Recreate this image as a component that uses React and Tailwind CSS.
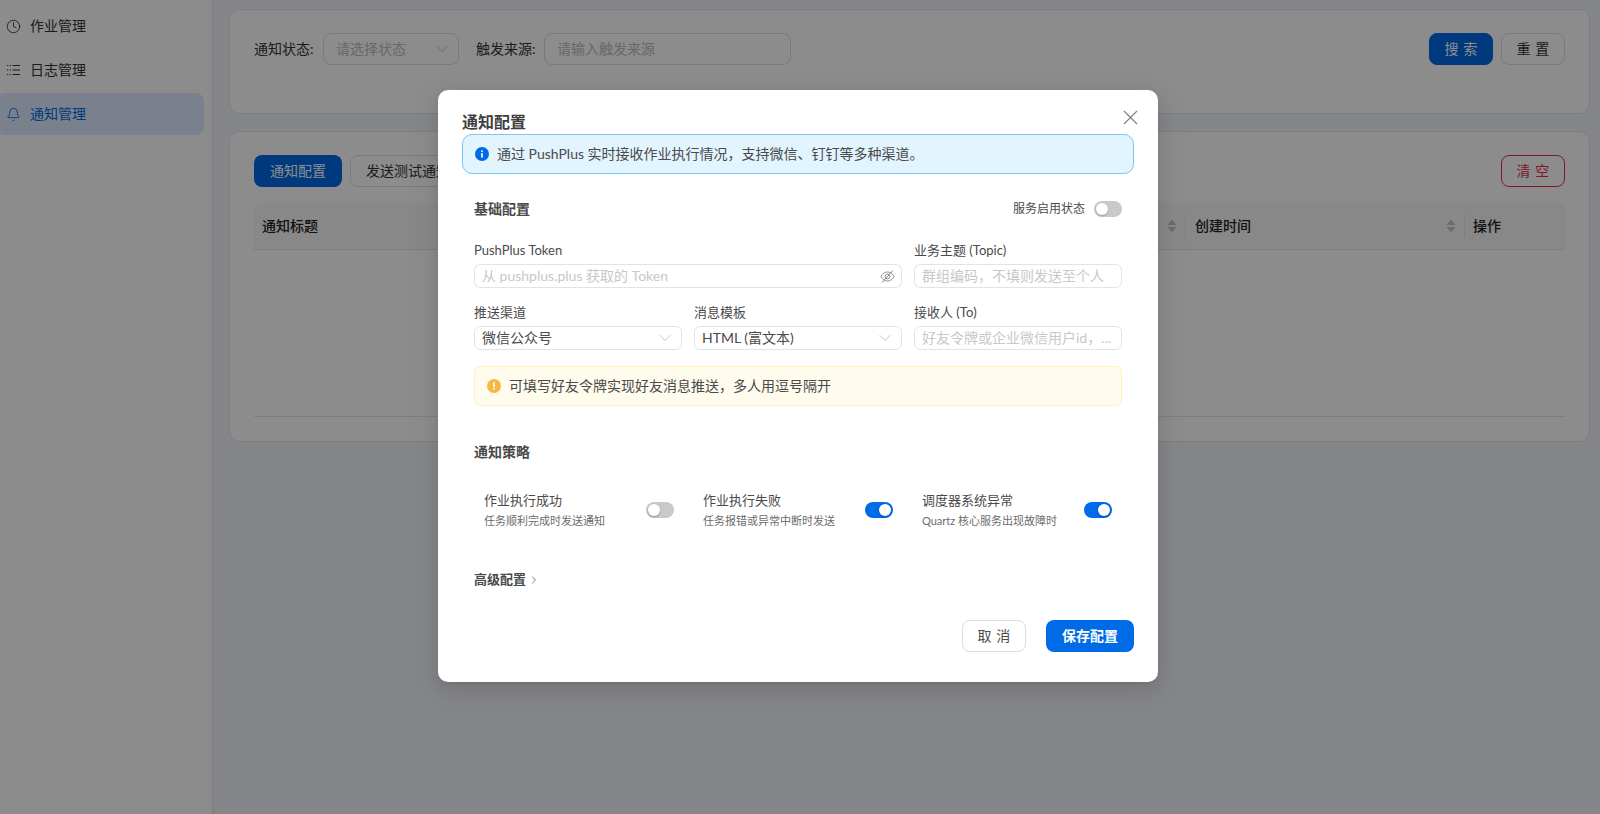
import { Bell, ChevronDown, ChevronRight, Clock, X } from "lucide-react";

const FONT = "font-['Lato','Noto_Sans_CJK_SC',sans-serif]";

const NAV = [
  { label: "作业管理", icon: <Clock size={15} strokeWidth={1.4} /> },
  { label: "日志管理", icon: <ListIcon /> },
  { label: "通知管理", icon: <Bell size={15} strokeWidth={1.4} />, active: true },
];

const STRATEGY = [
  { title: "作业执行成功", desc: "任务顺利完成时发送通知", on: false },
  { title: "作业执行失败", desc: "任务报错或异常中断时发送", on: true },
  { title: "调度器系统异常", desc: "Quartz 核心服务出现故障时", on: true },
];

function ListIcon() {
  return (
    <svg width="15" height="14" viewBox="0 0 15 14" fill="none" stroke="currentColor" strokeWidth="1.1">
      <path d="M1 2.5h1.2M3.8 2.5h1.2M6.6 2.5h7.4M1 7h1.2M3.8 7h1.2M6.6 7h7.4M1 11.5h1.2M3.8 11.5h1.2M6.6 11.5h7.4" />
    </svg>
  );
}

function SortIcon() {
  return (
    <svg width="10" height="14" viewBox="0 0 10 14" fill="#c4c4c4">
      <path d="M5 0.5 9.4 6H0.6z" />
      <path d="M5 13.5 9.4 8H0.6z" />
    </svg>
  );
}

function EyeSlash() {
  return (
    <svg width="15" height="15" viewBox="0 0 15 15" fill="none" stroke="#8c8c8c" strokeWidth="1">
      <path d="M1 7.5C2.6 4.4 4.8 3 7.5 3s4.9 1.4 6.5 4.5C12.4 10.6 10.2 12 7.5 12S2.6 10.6 1 7.5z" />
      <circle cx="7.5" cy="7.5" r="2.4" />
      <path d="M2.2 13.5 12.8 1.5" />
    </svg>
  );
}

function Switch({ on }) {
  return (
    <span
      className={`flex h-4 w-7 shrink-0 items-center rounded-full p-0.5 ${on ? "justify-end bg-[#006be6]" : "justify-start bg-[#c9c9c9]"}`}
    >
      <span className="h-3 w-3 rounded-full bg-white shadow-[0_1px_2px_rgba(0,0,0,0.25)]" />
    </span>
  );
}

function WideButton({ text, className }) {
  return (
    <button className={`flex h-8 w-16 items-center justify-center rounded-lg border text-sm ${className}`}>
      <span className="mr-[-0.34em] tracking-[0.34em]">{text}</span>
    </button>
  );
}

function FieldLabel({ children }) {
  return <div className="mb-1 h-5 text-[13px] leading-5 text-[#4a4a4a]">{children}</div>;
}

function SmallInput({ placeholder, children }) {
  return (
    <div className="flex h-6 items-center justify-between rounded-md border border-[#e3e3e3] pl-[7px] pr-[6px] text-sm text-[#c8c8c8]">
      <span className="truncate">{placeholder}</span>
      {children}
    </div>
  );
}

function SmallSelect({ value }) {
  return (
    <div className="flex h-6 items-center justify-between rounded-md border border-[#e3e3e3] pl-[7px] pr-[6px] text-sm text-[#4a4a4a]">
      <span>{value}</span>
      <ChevronDown size={20} strokeWidth={1} className="shrink-0 text-[#b5b5b5]" />
    </div>
  );
}

function Background() {
  return (
    <div className="flex h-full">
      <aside className="w-[213px] shrink-0 border-r border-[#dfe2e6] bg-white pr-2 pt-[5px]">
        {NAV.map((item) => (
          <div
            key={item.label}
            className={`mb-0.5 flex h-[42px] items-center gap-[9px] rounded-r-lg rounded-l-sm pl-[6px] text-sm ${item.active ? "bg-[#dfecff] text-[#0069e6]" : "text-[#333]"}`}
          >
            {item.icon}
            {item.label}
          </div>
        ))}
      </aside>
      <main className="flex-1 pl-[16px] pr-[10px] pt-[9px]">
        <section className="flex h-[105px] items-start justify-between rounded-[10px] border border-[#e4e6e9] bg-white px-6 pt-[23px] text-sm text-[#333]">
          <div className="flex items-center">
            <span className="w-[69px]">通知状态:</span>
            <div className="flex h-8 w-[136px] items-center justify-between rounded-lg border border-[#dedede] pl-3 pr-[6px] text-[#bdbdbd]">
              请选择状态
              <ChevronDown size={20} strokeWidth={1} className="shrink-0" />
            </div>
            <span className="ml-[17px] w-[68px]">触发来源:</span>
            <div className="flex h-8 w-[247px] items-center rounded-lg border border-[#dedede] px-3 text-[#bdbdbd]">
              请输入触发来源
            </div>
          </div>
          <div className="flex gap-2">
            <WideButton text="搜索" className="border-[#0069e6] bg-[#0069e6] text-white" />
            <WideButton text="重置" className="border-[#dedede] text-[#333]" />
          </div>
        </section>
        <section className="mt-[17px] h-[311px] rounded-[10px] border border-[#e4e6e9] bg-white px-6 pt-[23px] text-sm">
          <div className="flex justify-between">
            <div className="flex gap-2">
              <button className="h-8 w-[88px] rounded-lg bg-[#0069e6] text-white">通知配置</button>
              <button className="h-8 w-[116px] rounded-lg border border-[#dedede] text-[#333]">发送测试通知</button>
            </div>
            <WideButton text="清空" className="border-[#e6294a] text-[#e6294a]" />
          </div>
          <div className="mt-4 flex h-[47px] items-center justify-between rounded-t-lg border-b border-[#e4e6e9] bg-[#f8f8f8] pl-[8px] font-medium text-[#222]">
            <span>通知标题</span>
            <div className="flex items-center">
              <SortIcon />
              <span className="ml-[8px] mr-[9px] h-[22px] w-px bg-[#e4e6e9]" />
              <span className="w-[251px]">创建时间</span>
              <SortIcon />
              <span className="ml-[8px] mr-[8px] h-[22px] w-px bg-[#e4e6e9]" />
              <span className="w-[92px]">操作</span>
            </div>
          </div>
          <div className="h-[167px] border-b border-[#e4e6e9]" />
        </section>
      </main>
    </div>
  );
}

function SettingsModal() {
  return (
    <div className="relative ml-[438px] mt-[90px] w-[720px] rounded-[10px] bg-white px-6 pb-[30px] pt-5 text-[#4a4a4a] shadow-[0_6px_16px_rgba(0,0,0,0.08),0_3px_6px_-4px_rgba(0,0,0,0.12),0_9px_28px_8px_rgba(0,0,0,0.05)]">
      <h2 className="h-6 text-base font-semibold leading-6 text-[#3f3f3f]">通知配置</h2>
      <X size={25} strokeWidth={1.1} className="absolute right-[15px] top-[15px] text-[#808080]" />

      <div className="flex h-10 items-center gap-2 rounded-[10px] border border-[#7cc6f9] bg-[#e2f4fe] pl-3 text-sm">
        <svg width="14" height="14" viewBox="0 0 14 14">
          <circle cx="7" cy="7" r="7" fill="#006be6" />
          <rect x="6.2" y="6" width="1.6" height="4.6" fill="#fff" />
          <rect x="6.2" y="3.4" width="1.6" height="1.6" fill="#fff" />
        </svg>
        通过 PushPlus 实时接收作业执行情况，支持微信、钉钉等多种渠道。
      </div>

      <div className="px-3">
        <div className="mt-[25px] flex h-5 items-center justify-between">
          <h3 className="text-sm font-semibold">基础配置</h3>
          <div className="flex items-center gap-[9px] text-xs">
            服务启用状态
            <Switch on={false} />
          </div>
        </div>

        <div className="mt-[21px] grid grid-cols-3 gap-x-3 gap-y-[14px]">
          <div className="col-span-2">
            <FieldLabel>PushPlus Token</FieldLabel>
            <SmallInput placeholder="从 pushplus.plus 获取的 Token">
              <EyeSlash />
            </SmallInput>
          </div>
          <div>
            <FieldLabel>业务主题 (Topic)</FieldLabel>
            <SmallInput placeholder="群组编码，不填则发送至个人" />
          </div>
          <div>
            <FieldLabel>推送渠道</FieldLabel>
            <SmallSelect value="微信公众号" />
          </div>
          <div>
            <FieldLabel>消息模板</FieldLabel>
            <SmallSelect value="HTML (富文本)" />
          </div>
          <div>
            <FieldLabel>接收人 (To)</FieldLabel>
            <SmallInput placeholder="好友令牌或企业微信用户id，..." />
          </div>
        </div>

        <div className="mt-4 flex h-10 items-center gap-2 rounded-md border border-[#fff1b8] bg-[#fffcee] pl-3 text-sm">
          <svg width="14" height="14" viewBox="0 0 14 14">
            <circle cx="7" cy="7" r="7" fill="#f5b942" />
            <rect x="6.2" y="3.2" width="1.6" height="4.8" fill="#fff" />
            <rect x="6.2" y="9" width="1.6" height="1.6" fill="#fff" />
          </svg>
          可填写好友令牌实现好友消息推送，多人用逗号隔开
        </div>

        <h3 className="mt-[36px] h-5 text-sm font-semibold leading-5">通知策略</h3>

        <div className="mt-[28px] grid grid-cols-3 gap-x-[9px]">
          {STRATEGY.map((s) => (
            <div key={s.title} className="flex items-center justify-between px-2.5">
              <div>
                <div className="h-5 text-[13px] leading-5">{s.title}</div>
                <div className="mt-[3px] h-4 text-[11px] leading-4 text-[#6b6b6b]">{s.desc}</div>
              </div>
              <Switch on={s.on} />
            </div>
          ))}
        </div>

        <div className="mt-[41px] flex h-5 items-center gap-0.5 text-[13px] font-semibold">
          高级配置
          <ChevronRight size={12} strokeWidth={1.5} />
        </div>
      </div>

      <div className="mt-[30px] flex justify-end gap-5">
        <WideButton text="取消" className="border-[#dedede] text-[#4a4a4a]" />
        <button className="h-8 w-[88px] rounded-lg bg-[#006be6] text-sm font-semibold text-white">保存配置</button>
      </div>
    </div>
  );
}

export default function App() {
  return (
    <div className={`relative h-[814px] w-[1600px] overflow-hidden bg-[#f2f4f9] ${FONT}`}>
      <Background />
      <div className="absolute inset-0 bg-black/45">
        <SettingsModal />
      </div>
    </div>
  );
}
